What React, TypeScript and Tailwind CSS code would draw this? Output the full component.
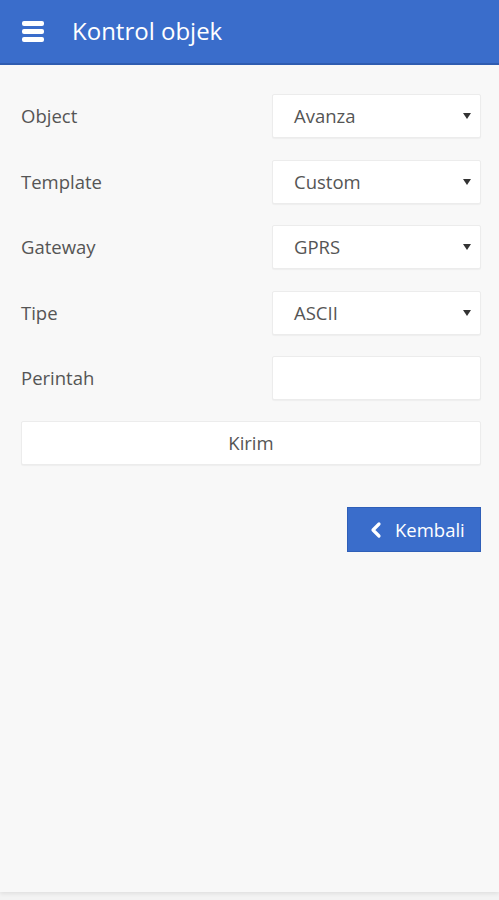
import { ChevronLeft } from "lucide-react";

const fields = [
  { label: "Object", value: "Avanza", select: true },
  { label: "Template", value: "Custom", select: true },
  { label: "Gateway", value: "GPRS", select: true },
  { label: "Tipe", value: "ASCII", select: true },
  { label: "Perintah", value: "", select: false },
];

function Caret() {
  return (
    <svg width="8" height="8" viewBox="0 0 8 8" className="absolute right-[9px] top-[17px]">
      <path d="M0 1 L8 1 L4 7 Z" fill="#333" />
    </svg>
  );
}

export default function App() {
  return (
    <div
      className="h-[900px] w-[499px] bg-[#f3f3f3]"
      style={{ fontFamily: '"Open Sans", sans-serif' }}
    >
      <div className="h-[892px] bg-[#f8f8f8] shadow-[0_2px_4px_rgba(0,0,0,0.08)]">
        <header className="flex h-[65px] items-center border-b-2 border-[#2f5cb0] bg-[#3a6dcb] text-white">
          <div className="ml-[22px] flex w-[22px] flex-col gap-[3px]">
            <span className="h-[5px] rounded-[2px] bg-white" />
            <span className="h-[5px] rounded-[2px] bg-white" />
            <span className="h-[5px] rounded-[2px] bg-white" />
          </div>
          <h1 className="ml-[28px] pb-[2px] text-[24px] leading-none">Kontrol objek</h1>
        </header>

        <div className="pl-[21px] pr-[18px] pt-[29px]">
          <div className="flex flex-col gap-[21.5px]">
            {fields.map((f) => (
              <div key={f.label} className="flex h-[44px] items-center justify-between">
                <span className="text-[18.5px] text-[#555]">{f.label}</span>
                <div className="relative flex h-[44px] w-[209px] items-center rounded-[2px] border border-[#ececec] bg-white pl-[21px] text-[18.5px] text-[#555] shadow-[0_1px_1px_rgba(0,0,0,0.04)]">
                  {f.value}
                  {f.select && <Caret />}
                </div>
              </div>
            ))}
          </div>

          <button className="mt-[21px] flex h-[44px] w-full items-center justify-center rounded-[2px] border border-[#ececec] bg-white text-[18.5px] text-[#555] shadow-[0_1px_1px_rgba(0,0,0,0.04)]">
            Kirim
          </button>

          <div className="mt-[42px] flex justify-end">
            <button className="flex h-[45px] w-[134px] items-center gap-[7px] border border-[#2f5fb8] bg-[#3a6dcb] pl-[16px] text-[18.5px] text-white">
              <ChevronLeft size={24} strokeWidth={3.2} />
              Kembali
            </button>
          </div>
        </div>
      </div>
    </div>
  );
}
